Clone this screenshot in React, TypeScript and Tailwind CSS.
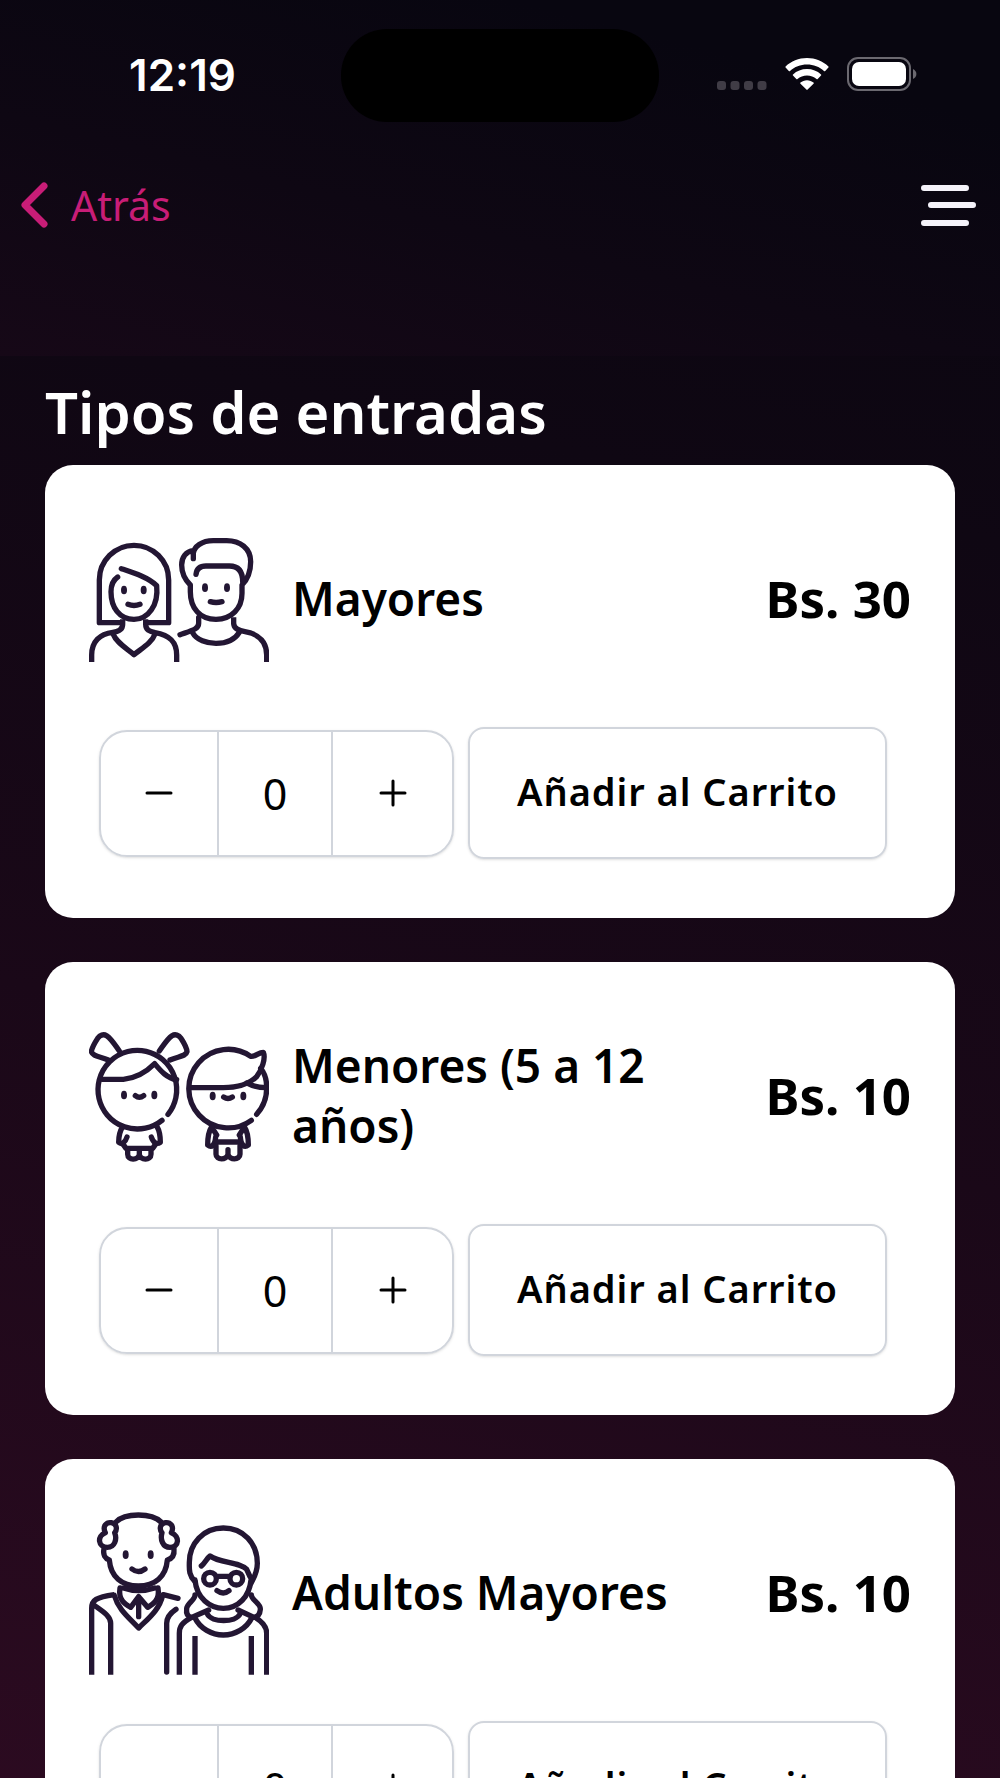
import { useState } from 'react';
import type { ReactNode } from 'react';

function Drawing({ viewBox, children }: { viewBox: string; children: ReactNode }) {
  return (
    <svg
      viewBox={viewBox}
      className="size-[180px] shrink-0 text-[#231633]"
      fill="none"
      stroke="currentColor"
      strokeWidth={16}
      strokeLinecap="round"
      strokeLinejoin="round"
      aria-hidden="true"
    >
      {children}
    </svg>
  );
}

function Eyes({ points }: { points: [number, number][] }) {
  return (
    <>
      {points.map(([cx, cy]) => (
        <ellipse key={cx} cx={cx} cy={cy} rx={9} ry={13} fill="currentColor" stroke="none" />
      ))}
    </>
  );
}

function AdultsIcon() {
  return (
    <Drawing viewBox="27 -30 540 540">
      {/* woman */}
      <path d="M122 308H58V180A104 104 0 0 1 266 180V308H203" />
      <path d="M124 146C160 158 205 172 230 197C236 255 205 298 162 298C118 298 93 262 93 215C93 195 100 180 113 171" />
      <path d="M128 298V313C128 328 118 335 98 337C60 341 35 365 35 405V426" strokeLinecap="butt" />
      <path d="M197 298V313C197 330 208 334 225 338C268 345 290 365 290 405V426" strokeLinecap="butt" />
      <path d="M98 340C110 370 140 385 162 404C185 385 215 370 226 340" />
      <path d="M144 253Q162 260 180 253" />
      {/* man */}
      <path d="M340 116V92C318 94 305 112 305 135C305 165 318 182 331 195V215C331 265 360 298 408 298C455 298 486 265 486 220V195C505 175 512 150 512 125C512 85 480 62 440 62H400C365 62 342 80 340 100" />
      <path d="M348 163C350 145 360 138 378 138H448C475 138 488 155 488 185" />
      <path d="M356 292V310C356 328 335 332 300 344" />
      <path d="M461 292V310C461 325 475 332 495 335C540 342 560 370 560 405V426" strokeLinecap="butt" />
      <path d="M338 338C350 360 380 370 408 370C440 370 465 358 478 337" />
      <path d="M391 245Q408 250 426 245" />
      <Eyes points={[[132, 210], [191, 210], [375, 203], [441, 203]]} />
    </Drawing>
  );
}

function ChildrenIcon() {
  return (
    <Drawing viewBox="27 -24 540 540">
      {/* girl */}
      <path d="M264 298A118 118 0 1 0 246 316" />
      <path d="M66 193H130C165 190 195 175 224 146C240 165 260 190 290 194" />
      <path d="M118 108C105 90 95 72 80 62C70 56 60 60 53 70C44 84 36 96 34 110C38 124 60 124 85 135" />
      <path d="M238 108C251 90 261 72 276 62C286 56 296 60 303 70C312 84 320 96 321 110C318 124 296 124 270 135" />
      <path d="M166 242Q178 252 191 242" />
      <path d="M128 335C118 350 116 365 116 382C125 390 136 382 141 366" />
      <path d="M231 335C240 350 241 365 241 382C230 390 219 382 214 366" />
      <path d="M128 386L138 400H218L228 386" />
      <path d="M143 404V418C143 438 176 436 178 418V404M178 418C180 436 213 438 213 418V404" />
      {/* boy */}
      <path d="M530 298A118 118 0 0 0 560 217C560 195 552 172 542 160" />
      <path d="M514 316A118 118 0 1 1 512 124C527 126 535 112 550 112C558 130 545 165 530 185C500 215 460 218 430 218H330" />
      <path d="M500 204C520 215 535 218 558 218" />
      <path d="M431 246Q444 255 457 246" />
      <path d="M395 335C385 350 383 365 383 390C395 400 405 390 407 366" />
      <path d="M493 335C503 350 505 365 505 390C493 400 483 390 481 366" />
      <path d="M396 338L410 360M492 338L478 360M410 381H478" />
      <path d="M408 392V418C408 436 440 436 444 418V404M444 418C448 436 480 436 480 418V392" />
      <Eyes points={[[132, 240], [223, 240], [398, 243], [490, 243]]} />
    </Drawing>
  );
}

function SeniorsIcon() {
  return (
    <Drawing viewBox="27 12 540 540">
      {/* grandfather */}
      <path d="M108 66C135 38 215 38 243 66" />
      <path d="M76 98C66 78 80 66 94 68C110 70 113 88 104 98C112 118 104 142 82 142C54 142 50 108 76 98Z" />
      <path d="M274 98C284 78 270 66 256 68C240 70 237 88 246 98C240 118 248 142 270 142C298 142 300 108 274 98Z" />
      <path d="M72 146C68 165 76 176 88 180C92 230 125 258 175 258C225 258 258 230 262 180C275 176 284 165 282 146" />
      <path d="M156 207Q175 222 195 207" />
      <path d="M35 524V325C35 300 48 292 103 284M38 312C60 330 92 345 92 370V524" strokeLinecap="butt" />
      <path d="M250 284L294 295M288 328C270 340 260 352 260 370V516" />
      <path d="M103 286C115 330 150 355 176 384C205 355 238 330 248 286" />
      <path d="M120 264C114 300 135 312 152 322L176 290L203 322C220 312 240 300 234 264M130 264Q176 280 224 264M176 290V350" />
      {/* grandmother */}
      <path d="M345 245C325 225 328 205 328 187C328 130 370 84 430 84C490 84 532 130 532 190C532 220 520 235 513 250" />
      <path d="M364 198C375 190 380 175 390 168C420 190 480 185 500 208L510 230" />
      <path d="M345 240C350 295 390 325 430 325C475 325 508 290 513 240" />
      <circle cx={390} cy={236} r={19} />
      <circle cx={469} cy={236} r={19} />
      <path d="M410 229H450M411 272Q430 286 447 272" />
      <path d="M345 285C345 300 322 310 320 325C318 340 322 350 335 352L386 330" />
      <path d="M514 285C514 300 543 310 541 328C540 342 535 350 522 352L474 330" />
      <path d="M345 354C360 385 395 405 430 405C465 405 500 385 515 354M382 342C394 368 468 368 480 342" />
      <path d="M335 352C305 368 298 380 298 400V524M525 352C555 370 560 385 560 400V524M345 408V524M514 408V524" strokeLinecap="butt" />
      <Eyes points={[[137, 164], [212, 164]]} />
    </Drawing>
  );
}

const tickets = [
  { id: 'mayores', name: 'Mayores', price: 30, icon: AdultsIcon },
  { id: 'menores', name: 'Menores (5 a 12 años)', price: 10, icon: ChildrenIcon },
  { id: 'adultos-mayores', name: 'Adultos Mayores', price: 10, icon: SeniorsIcon },
];

function StatusBar() {
  return (
    <div className="grid grid-cols-[1fr_318px_1fr] items-center pt-[29px] text-white">
      <span className="pb-[2px] pl-[24px] text-center font-[Inter] text-[44px] leading-none font-semibold">12:19</span>
      <div className="h-[93px] rounded-[46px] bg-black" />
      <div className="flex items-center justify-end gap-[18px] pr-[83px] pb-[3px]">
        <svg viewBox="0 0 100 64" className="h-[32px] w-[50px]" fill="#403c46" aria-hidden="true">
          <rect x="0" y="46" width="18" height="18" rx="6" />
          <rect x="27" y="46" width="18" height="18" rx="6" />
          <rect x="54" y="46" width="18" height="18" rx="6" />
          <rect x="81" y="46" width="18" height="18" rx="6" />
        </svg>
        <svg viewBox="0 0 44 32" className="h-[32px] w-[44px]" fill="white" aria-hidden="true">
          <path d="M22 0C13.8 0 6 3.3 .6 8.4Q0 9 .6 9.6L3.8 13Q4.4 13.6 5 13C9.5 8.9 15.5 6.6 22 6.6S34.5 8.9 39 13Q39.6 13.6 40.2 13L43.4 9.6Q44 9 43.4 8.4C38 3.3 30.2 0 22 0Z" />
          <path d="M22 11C16.6 11 11.7 13 8 16.4Q7.4 17 8 17.6L11.3 20.9Q11.9 21.5 12.5 20.9C15 18.7 18.4 17.4 22 17.4S29 18.7 31.5 20.9Q32.1 21.5 32.7 20.9L36 17.6Q36.6 17 36 16.4C32.3 13 27.4 11 22 11Z" />
          <path d="M22 22.2C19.5 22.2 17.2 23.1 15.5 24.6Q14.9 25.2 15.5 25.8L21.4 31.6Q22 32.2 22.6 31.6L28.5 25.8Q29.1 25.2 28.5 24.6C26.8 23.1 24.5 22.2 22 22.2Z" />
        </svg>
        <svg viewBox="0 0 70 34" className="h-[34px] w-[70px]" aria-hidden="true">
          <rect x="1" y="1" width="62" height="32" rx="10" fill="none" stroke="#6b6970" strokeWidth="2" />
          <rect x="5" y="5" width="54" height="24" rx="7" fill="white" />
          <path d="M66 12C70.5 14 70.5 20 66 22Z" fill="#6b6970" />
        </svg>
      </div>
    </div>
  );
}

function NavBar() {
  return (
    <nav className="flex items-center justify-between px-[21px] pt-[49px]">
      <a href="#" className="flex items-center gap-[22px] text-[41px] leading-[68px] text-[#c81d77]">
        <svg viewBox="0 0 28 48" className="h-[48px] w-[28px]" fill="none" stroke="currentColor" strokeWidth="7" strokeLinecap="round" strokeLinejoin="round" aria-hidden="true">
          <path d="M23 5L4 24L23 43" />
        </svg>
        Atrás
      </a>
      <button type="button" aria-label="Menú">
        <svg viewBox="0 0 58 44" className="h-[44px] w-[58px]" fill="none" stroke="#f5f3fa" strokeWidth="6" strokeLinecap="round" aria-hidden="true">
          <path d="M3 5H45M10 22H52M3 40H45" />
        </svg>
      </button>
    </nav>
  );
}

function QuantityStepper({ label }: { label: string }) {
  const [quantity, setQuantity] = useState(0);

  return (
    <div
      role="group"
      aria-label={label}
      className="grid h-[127px] w-[355px] shrink-0 grid-cols-[118px_114px_1fr] divide-x-2 divide-gray-300 rounded-[28px] border-2 border-gray-300 shadow-sm"
    >
      <button
        type="button"
        aria-label="Quitar"
        className="flex items-center justify-center"
        onClick={() => setQuantity(Math.max(0, quantity - 1))}
      >
        <svg viewBox="0 0 28 28" className="size-[28px]" stroke="black" strokeWidth="3" strokeLinecap="round" aria-hidden="true">
          <path d="M2 14H26" />
        </svg>
      </button>
      <output className="flex items-center justify-center text-[43px] leading-none">{quantity}</output>
      <button
        type="button"
        aria-label="Agregar"
        className="flex items-center justify-center"
        onClick={() => setQuantity(quantity + 1)}
      >
        <svg viewBox="0 0 28 28" className="size-[28px]" stroke="black" strokeWidth="3" strokeLinecap="round" aria-hidden="true">
          <path d="M2 14H26M14 2V26" />
        </svg>
      </button>
    </div>
  );
}

export default function App() {
  return (
    <div className="min-h-screen bg-linear-[192deg,#08060f_0%,#0f0713_25%,#1a0818_55%,#2f0b22_100%] font-['Noto_Sans',sans-serif] text-black">
      <header className="h-[356px] bg-linear-[194deg,#080610_20%,#0e0713_60%,#160817_100%]">
        <StatusBar />
        <NavBar />
      </header>

      <main className="px-[45px] pb-[44px]">
        <h1 className="pt-[16px] text-[58px] leading-[80px] font-semibold text-white">Tipos de entradas</h1>
        <ul className="mt-[13px] flex flex-col gap-[44px]">
          {tickets.map((ticket) => (
            <li key={ticket.id} className="rounded-[28px] bg-white px-[44px] pt-[45px] pb-[59px]">
              <div className="flex items-center">
                <ticket.icon />
                <h2 className="ml-[23px] flex-1 pr-10 pb-1 text-[46px] leading-[60px] font-semibold">{ticket.name}</h2>
                <p className="pb-1 text-[51px] leading-[60px] font-bold whitespace-nowrap">Bs. {ticket.price}</p>
              </div>
              <div className="mt-[37px] flex items-center gap-[14px] pr-[24px] pl-[10px]">
                <QuantityStepper label={ticket.name} />
                <button
                  type="button"
                  className="h-[132px] flex-1 rounded-[16px] border-2 border-gray-300 pb-1 text-[38px] font-semibold tracking-wide whitespace-nowrap shadow-sm"
                >
                  Añadir al Carrito
                </button>
              </div>
            </li>
          ))}
        </ul>
      </main>
    </div>
  );
}
